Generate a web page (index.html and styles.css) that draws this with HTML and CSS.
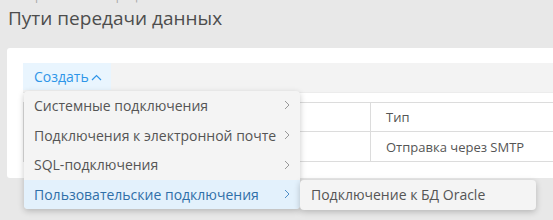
FILE: index.html
```html
<!DOCTYPE html>
<html lang="ru">
<head>
<meta charset="utf-8">
<link rel="stylesheet" href="styles.css">
</head>
<body>
<div class="crumbs">Настройки / Интеграция</div>
<h1 class="title">Пути передачи данных</h1>
<div class="card">
  <div class="toolbar">
    <div class="create-wrap">
      <button class="create">Создать<svg class="caret" width="11" height="7" viewBox="0 0 11 7"><polyline points="1,6 5.5,1.5 10,6" fill="none" stroke="currentColor" stroke-width="1.2"/></svg></button>
      <ul class="menu">
        <li class="item"><span>Системные подключения</span><svg class="chev" width="6" height="10" viewBox="0 0 6 10"><polyline points="1,1 5,5 1,9" fill="none" stroke="currentColor" stroke-width="1"/></svg></li>
        <li class="item"><span>Подключения к электронной почте</span><svg class="chev" width="6" height="10" viewBox="0 0 6 10"><polyline points="1,1 5,5 1,9" fill="none" stroke="currentColor" stroke-width="1"/></svg></li>
        <li class="item"><span>SQL-подключения</span><svg class="chev" width="6" height="10" viewBox="0 0 6 10"><polyline points="1,1 5,5 1,9" fill="none" stroke="currentColor" stroke-width="1"/></svg></li>
        <li class="item active"><span>Пользовательские подключения</span><svg class="chev" width="6" height="10" viewBox="0 0 6 10"><polyline points="1,1 5,5 1,9" fill="none" stroke="currentColor" stroke-width="1"/></svg>
          <ul class="submenu">
            <li class="subitem">Подключение к БД Oracle</li>
          </ul>
        </li>
      </ul>
    </div>
  </div>
  <table class="grid">
    <thead>
      <tr><th class="c-name"></th><th class="c-type">Тип</th></tr>
    </thead>
    <tbody>
      <tr><td class="c-name"></td><td class="c-type">Отправка через SMTP</td></tr>
    </tbody>
  </table>
</div>
</body>
</html>
```
FILE: styles.css
```css
* { box-sizing: border-box; }
html, body { margin: 0; padding: 0; }
body {
  width: 553px;
  height: 220px;
  overflow: hidden;
  background: #e8e8e8;
  font-family: "Open Sans", "Liberation Sans", sans-serif;
  color: #555;
}
.crumbs {
  height: 14px;
  margin-top: -11px;
  padding-left: 8px;
  font-size: 12px;
  line-height: 14px;
  color: #aaa;
}
.title {
  margin: 3px 0 0 8px;
  font-size: 19px;
  font-weight: 400;
  line-height: 24px;
  color: #4d4d4d;
}
.card {
  margin: 18px 0 0 7px;
  width: 560px;
  background: #fff;
  border-radius: 3px;
  padding: 15px 0 16px 16px;
}
.toolbar {
  height: 30px;
  background: #f3f3f3;
  border-bottom: 1px solid #ececec;
}
.create-wrap { position: relative; display: inline-block; }
.create {
  display: flex;
  align-items: center;
  height: 27px;
  width: 88px;
  padding: 0 0 0 11px;
  border: 0;
  background: #e9f5fe;
  color: #2f95e8;
  font-family: inherit;
  font-size: 14px;
}
.caret { margin-left: 2px; margin-top: 1px; }
.menu {
  position: absolute;
  left: 1px;
  top: 27.5px;
  width: 276px;
  margin: 0;
  padding: 0;
  list-style: none;
  background: #f4f4f4;
  border-radius: 4px;
  box-shadow: 0 2px 6px rgba(0,0,0,0.22);
  z-index: 5;
}
.item {
  position: relative;
  display: flex;
  align-items: center;
  justify-content: space-between;
  height: 29.7px;
  padding: 0 10px 0 10px;
  font-size: 14px;
  color: #555;
  white-space: nowrap;
}
.item .chev { color: #999; flex: none; }
.item.active {
  background: #e3f1fc;
  color: #2f6fa8;
  border-radius: 0 0 4px 4px;
}
.item.active .chev { color: #4f8fc7; }
.submenu {
  position: absolute;
  left: 276px;
  top: 0;
  width: 236px;
  height: 30px;
  margin: 0;
  padding: 0 0 0 11px;
  list-style: none;
  background: #f4f4f4;
  border-radius: 4px;
  box-shadow: 0 2px 6px rgba(0,0,0,0.22);
}
.subitem {
  line-height: 30px;
  font-size: 14px;
  color: #555;
}
.grid {
  margin-top: 9px;
  border-collapse: collapse;
  width: 560px;
  font-size: 13px;
  color: #555;
}
.grid th, .grid td {
  border: 1px solid #dcdcdc;
  text-align: left;
  font-weight: 400;
  padding: 0 15px;
}
.grid th { height: 29px; }
.grid td { height: 30px; }
.c-name { width: 347px; }
```
